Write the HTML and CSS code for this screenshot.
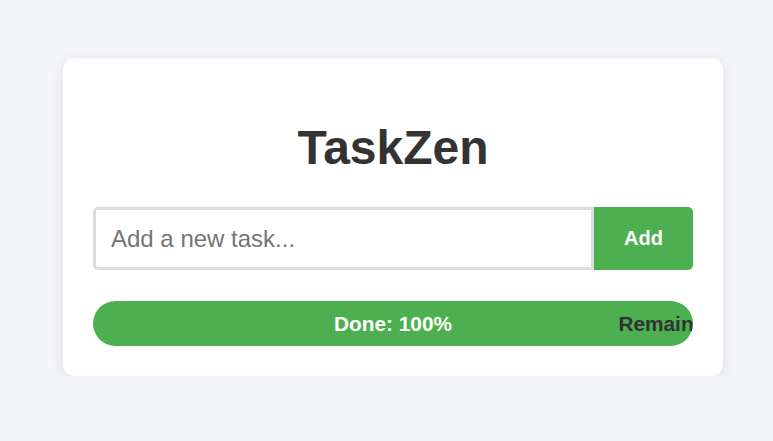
FILE: index.html
```html
<!DOCTYPE html>
<html lang="en">
<head>
<meta charset="utf-8">
<title>TaskZen</title>
<link rel="stylesheet" href="styles.css">
</head>
<body>
<main class="page">
  <section class="card">
    <h1 class="title">TaskZen</h1>
    <form class="add-form">
      <input class="task-input" type="text" placeholder="Add a new task...">
      <button class="add-btn" type="button">Add</button>
    </form>
    <div class="progress">
      <div class="seg seg-done" style="width:100%"><span>Done: 100%</span></div>
      <div class="seg seg-remain" style="width:0%"><span>Remaining: 0%</span></div>
    </div>
  </section>
</main>
</body>
</html>
```

FILE: styles.css
```css
* { box-sizing: border-box; }
html, body { margin: 0; padding: 0; }
body {
  background: #f4f5f9;
  font-family: "Liberation Sans", Arial, sans-serif;
  color: #333;
}
.page {
  padding: 58px 50px 0 63px;
}
.card {
  width: 660px;
  background: #fff;
  border-radius: 12px;
  box-shadow: 0 2px 14px rgba(0, 0, 0, 0.09);
  padding: 30px;
}
.title {
  margin: 32px 0 32px;
  text-align: center;
  font-size: 48px;
  font-weight: 700;
  line-height: 55px;
  color: #333;
}
.add-form {
  display: flex;
  margin: 0 0 31px;
}
.task-input {
  flex: 1;
  min-width: 0;
  height: 63px;
  border: 3px solid #ddd;
  border-radius: 5px 0 0 5px;
  padding: 0 15px;
  font-family: "Liberation Sans", Arial, sans-serif;
  font-size: 24px;
  color: #333;
  outline: none;
}
.task-input::placeholder { color: #757575; }
.add-btn {
  width: 99px;
  height: 63px;
  border: 0;
  border-radius: 0 5px 5px 0;
  background: #4caf50;
  color: #fff;
  font-family: "Liberation Sans", Arial, sans-serif;
  font-size: 20px;
  font-weight: 700;
}
.progress {
  display: flex;
  height: 45px;
  border-radius: 23px;
  overflow: hidden;
  background: #e0e0e0;
}
.seg {
  display: flex;
  align-items: center;
  justify-content: center;
  flex-shrink: 0;
  font-size: 20.8px;
  font-weight: 700;
  white-space: nowrap;
}
.seg-done { background: #4caf50; color: #fff; }
.seg-remain { color: #333; }
```
